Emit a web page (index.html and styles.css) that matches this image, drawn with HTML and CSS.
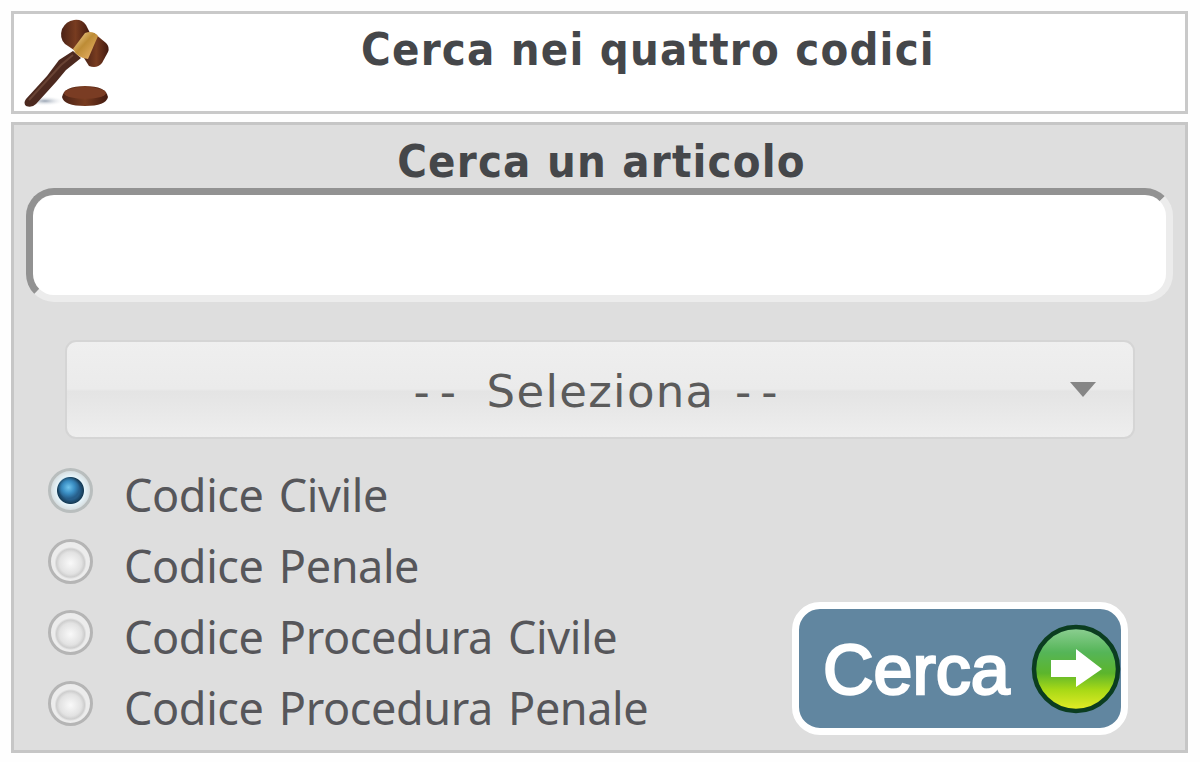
FILE: index.html
```
<!DOCTYPE html>
<html lang="it">
<head>
  <meta charset="UTF-8">
  <meta name="viewport" content="width=device-width, initial-scale=1.0">
  <title>Cerca nei quattro codici</title>
  <link rel="stylesheet" href="styles.css">
</head>
<body>
  <div class="header">
    <!-- Gavel -->
    <svg class="gavel" viewBox="0 0 92 92">
      <defs>
        <linearGradient id="wood" x1="0" y1="0" x2="1" y2="0">
          <stop offset="0" stop-color="#4a2216"/>
          <stop offset="0.5" stop-color="#783c20"/>
          <stop offset="1" stop-color="#42190f"/>
        </linearGradient>
        <linearGradient id="gold" x1="0" y1="0" x2="1" y2="1">
          <stop offset="0" stop-color="#ffdfaa"/>
          <stop offset="0.45" stop-color="#bd8c35"/>
          <stop offset="1" stop-color="#f1b870"/>
        </linearGradient>
        <radialGradient id="shadow">
          <stop offset="0" stop-color="#9aa5b4"/>
          <stop offset="1" stop-color="#ffffff" stop-opacity="0"/>
        </radialGradient>
      </defs>
      <ellipse cx="23" cy="83" rx="20" ry="5" fill="url(#shadow)"/>
      <path d="M51 33 L59 40 L44 52 L34 64 L14 86 Q10 90 4 88 Q1 85 4 81 L25 58 L37 42 Z" fill="#4c291f"/>
      <path d="M7 82 L39 47 L51 37" fill="none" stroke="#694334" stroke-width="2"/>
      <path d="M40 11 Q44 3 52 2 Q60 1 64 7 L68 15 L52 32 L43 26 Q37 20 40 11 Z" fill="url(#wood)"/>
      <path d="M72 15 L84 25 Q88 29 86 34 L80 45 Q75 51 67 48 L62 40 Z" fill="url(#wood)"/>
      <path d="M63 15 Q71 12 76 18 L66 41 Q55 40 51 31 Z" fill="url(#gold)"/>
      <path d="M40 79 Q42 68 63 68 Q84 68 86 79 Q84 88 63 88 Q42 88 40 79 Z" fill="url(#wood)"/>
      <ellipse cx="63" cy="75" rx="21" ry="6" fill="#7a3c23"/>
    </svg>
    <h1 class="title">Cerca nei quattro codici</h1>
  </div>

  <form class="panel">
    <h2 class="subtitle">Cerca un articolo</h2>
    <input type="text" class="article" aria-label="Articolo">

    <div class="select">
      <div class="select-text"><span class="dashes">--</span> Seleziona <span class="dashes">--</span></div>
      <span class="arrow"></span>
    </div>

    <div class="bottom">
      <div class="codes">
        <label class="code"><input type="radio" name="codice" class="radio" checked>Codice Civile</label>
        <label class="code"><input type="radio" name="codice" class="radio">Codice Penale</label>
        <label class="code"><input type="radio" name="codice" class="radio">Codice Procedura Civile</label>
        <label class="code"><input type="radio" name="codice" class="radio">Codice Procedura Penale</label>
      </div>

      <button type="button" class="search">
        <span class="search-text">Cerca</span>
        <svg class="go" viewBox="0 0 90 90">
          <defs>
            <linearGradient id="green" x1="0" y1="0" x2="0" y2="1">
              <stop offset="0" stop-color="#8fd095"/>
              <stop offset="0.3" stop-color="#55b558"/>
              <stop offset="0.55" stop-color="#5cb52c"/>
              <stop offset="0.75" stop-color="#a8d916"/>
              <stop offset="1" stop-color="#e8ed27"/>
            </linearGradient>
          </defs>
          <circle cx="45" cy="45" r="42" fill="url(#green)" stroke="#0b3d20" stroke-width="4.5"/>
          <path d="M20 36 H45 V25 L71 45 L45 63 V53 H20 Z" fill="#fff"/>
        </svg>
      </button>
    </div>
  </form>
</body>
</html>
```
FILE: styles.css
```
* {
  box-sizing: border-box;
}
body {
  margin: 0;
  padding: 11px 12px 0 11px;
  background: #fefefe;
  color: #45474a;
  font-family: "DejaVu Sans Condensed", "DejaVu Sans", sans-serif;
}
.header {
  display: flex;
  height: 103px;
  border: 3px solid #c9c9c9;
  background: #fff;
}
.gavel {
  width: 92px;
  height: 92px;
  margin: 4px 0 0 8px;
}
.title, .subtitle {
  margin: 0;
  font-size: 45px;
  font-weight: bold;
  line-height: 60px;
  letter-spacing: 1.2px;
  text-align: center;
  white-space: nowrap;
}
.title {
  flex: 1;
  padding-top: 6px;
  padding-right: 3px;
}
.panel {
  height: 631px;
  margin-top: 8px;
  padding: 0 12px;
  border: 3px solid #c6c6c6;
  background: #dedede;
}
.subtitle {
  height: 63px;
  padding: 7px 0 0 4px;
}
.article {
  display: block;
  width: 1147px;
  height: 114px;
  border: 7px solid;
  border-color: #929292 #ececec #ececec #929292;
  border-radius: 28px;
  background: #fff;
  outline: none;
}
.select {
  display: flex;
  align-items: center;
  width: 1070px;
  height: 99px;
  margin: 38px 0 0 39px;
  padding-right: 37px;
  border: 2px solid #d5d5d5;
  border-radius: 11px;
  background: linear-gradient(#efefef, #ebebeb 49%, #e4e4e4 52%, #eeeeee);
}
.select-text {
  flex: 1;
  padding: 3px 0 0 64px;
  color: #5b5b5b;
  font-family: "DejaVu Sans", sans-serif;
  font-size: 45px;
  letter-spacing: 1.3px;
  word-spacing: 5px;
  text-align: center;
}
.dashes {
  letter-spacing: 10px;
}
.arrow {
  border: 13px solid transparent;
  border-top: 15px solid #868686;
  border-bottom: 0;
}
.bottom {
  display: flex;
  justify-content: space-between;
  padding: 20px 45px 0 22px;
}
.code {
  display: flex;
  align-items: center;
  height: 71px;
  color: #56565a;
  font-family: "Noto Sans", sans-serif;
  font-size: 45px;
  letter-spacing: -0.4px;
  word-spacing: 4px;
  white-space: nowrap;
}
.radio {
  appearance: none;
  width: 45px;
  height: 45px;
  margin: 0 31px 9px 0;
  border: 3px solid #b5b5b5;
  border-radius: 50%;
  background: radial-gradient(circle at 50% 54%, #f9f9f9 0, #e2e2e2 11px, #cecece 14px, #ececec 16px);
}
.radio:checked {
  border-color: #b9bebe;
  background: radial-gradient(circle at 45% 42%, #70c4ec 0, #3b8fc4 6px, transparent 11px), radial-gradient(circle, #275f8b 9px, #163c57 13px, #e6f4fa 14px, #d5dcde 20px);
}
.search {
  display: flex;
  align-items: center;
  justify-content: space-between;
  width: 336px;
  height: 133px;
  margin-top: 143px;
  padding: 0 0 0 24px;
  border: 7px solid #fff;
  border-radius: 28px;
  background: #6186a0;
  color: #fff;
}
.search-text {
  padding-top: 2px;
  font-family: "Liberation Sans", sans-serif;
  font-size: 70px;
  -webkit-text-stroke: 2.5px #fff;
}
.go {
  width: 90px;
  height: 90px;
}
```
